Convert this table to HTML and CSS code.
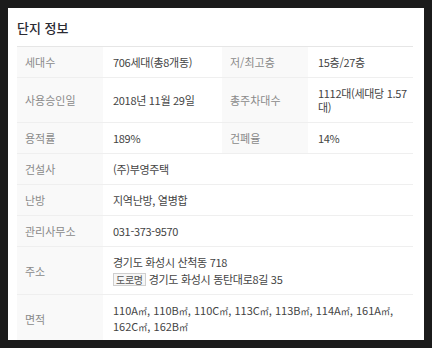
FILE: index.html
```html
<!DOCTYPE html>
<html lang="ko">
<head>
<meta charset="utf-8">
<link rel="stylesheet" href="styles.css">
</head>
<body>
<section class="panel">
  <h2 class="title">단지 정보</h2>
  <table class="info">
    <colgroup>
      <col class="c-label"><col class="c-value"><col class="c-label"><col class="c-value2">
    </colgroup>
    <tr>
      <th>세대수</th><td>706세대(총8개동)</td>
      <th>저/최고층</th><td>15층/27층</td>
    </tr>
    <tr>
      <th>사용승인일</th><td>2018년 11월 29일</td>
      <th>총주차대수</th><td>1112대(세대당 1.57 대)</td>
    </tr>
    <tr>
      <th>용적률</th><td>189%</td>
      <th>건폐율</th><td>14%</td>
    </tr>
    <tr>
      <th>건설사</th><td colspan="3">(주)부영주택</td>
    </tr>
    <tr>
      <th>난방</th><td colspan="3">지역난방, 열병합</td>
    </tr>
    <tr>
      <th>관리사무소</th><td colspan="3">031-373-9570</td>
    </tr>
    <tr>
      <th>주소</th>
      <td colspan="3">
        <div class="addr">경기도 화성시 산척동 718</div>
        <div class="addr road"><span class="badge">도로명</span>경기도 화성시 동탄대로8길 35</div>
      </td>
    </tr>
    <tr>
      <th>면적</th>
      <td colspan="3" class="areas"><span class="area">110A<span class="u">㎡</span>,</span> <span class="area">110B<span class="u">㎡</span>,</span> <span class="area">110C<span class="u">㎡</span>,</span> <span class="area">113C<span class="u">㎡</span>,</span> <span class="area">113B<span class="u">㎡</span>,</span> <span class="area">114A<span class="u">㎡</span>,</span> <span class="area">161A<span class="u">㎡</span>,</span> <span class="area">162C<span class="u">㎡</span>,</span> <span class="area">162B<span class="u">㎡</span></span></td>
    </tr>
  </table>
</section>
</body>
</html>
```
FILE: styles.css
```css
html, body {
  margin: 0;
  background: #1b1b1b;
}
body {
  padding: 8px;
  font-family: "Noto Sans CJK KR", "Noto Sans", sans-serif;
}
.panel {
  background: #fff;
  height: 332px;
  overflow: hidden;
  padding: 0 9px;
  box-sizing: border-box;
}
.title {
  margin: 0;
  height: 38px;
  box-sizing: border-box;
  padding-top: 11px;
  font-size: 13px;
  line-height: 18px;
  font-weight: 500;
  color: #2b2b33;
}
.info {
  width: 396px;
  table-layout: fixed;
  border-collapse: collapse;
  border-top: 1px solid #e6e6e6;
  font-size: 11px;
  line-height: 14px;
}
.c-label { width: 86px; }
.c-value { width: 119px; }
.c-value2 { width: 105px; }
.info th, .info td {
  border-bottom: 1px solid #efefef;
  padding: 8px 0 8px 10px;
  text-align: left;
  vertical-align: middle;
  font-weight: 400;
}
.info th {
  background: #f9f9f9;
  color: #8a8a8a;
  padding-left: 8px;
}
.info td {
  color: #444;
  letter-spacing: -0.3px;
}
.info td.areas {
  letter-spacing: 0;
}
.area {
  white-space: nowrap;
}
.u {
  font-size: 9px;
}
.addr.road {
  margin-top: 3px;
  display: flex;
  align-items: center;
}
.badge {
  display: inline-block;
  border: 1px solid #cfcfcf;
  background: #f6f6f6;
  color: #555;
  font-size: 10px;
  line-height: 11px;
  padding: 0 2px;
  margin-right: 3px;
}
```
